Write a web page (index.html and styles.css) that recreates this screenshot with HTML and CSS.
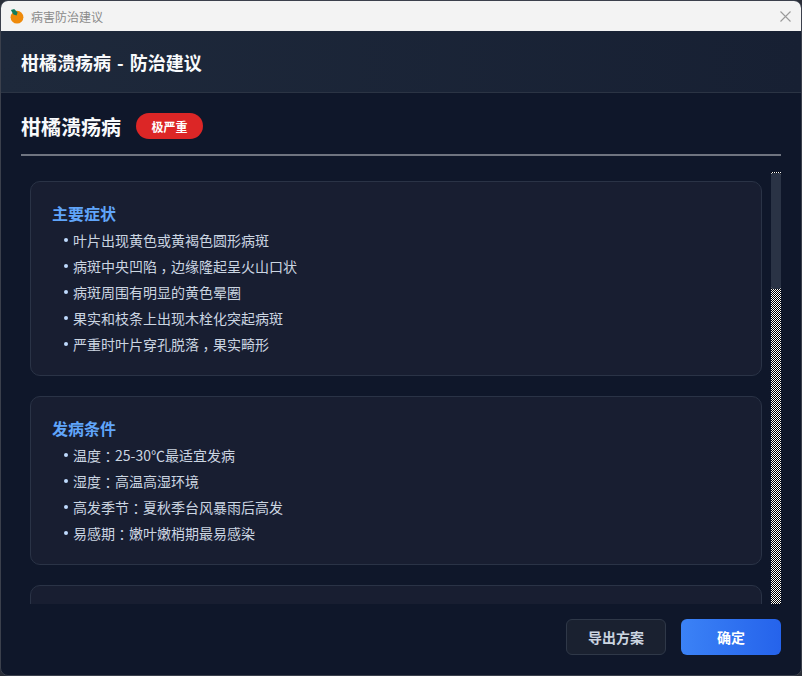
FILE: index.html
```html
<!DOCTYPE html>
<html lang="zh-CN">
<head>
<meta charset="utf-8">
<title>病害防治建议</title>
<link rel="stylesheet" href="styles.css">
</head>
<body>
<div class="window">
  <div class="titlebar">
    <svg class="app-icon" viewBox="0 0 14 15" width="14" height="15">
      <circle cx="7" cy="8.2" r="6.4" fill="#ef8a0a"/>
      <path d="M0.9 1 L4.2 0 L7.6 3.4 L6.6 6.4 L3.4 5.4 Z" fill="#137c5c"/>
    </svg>
    <span class="titlebar-text">病害防治建议</span>
    <svg class="close-icon" viewBox="0 0 11 11" width="11" height="11">
      <path d="M0.5 0.5 L10.5 10.5 M10.5 0.5 L0.5 10.5" stroke="#9a9a9a" stroke-width="1.1" fill="none"/>
    </svg>
  </div>
  <header class="header">柑橘溃疡病 - 防治建议</header>
  <main class="content">
    <div class="disease-row">
      <h1 class="disease-name">柑橘溃疡病</h1>
      <span class="badge">极严重</span>
    </div>
    <div class="scroll-area">
      <div class="scroller">
        <section class="card">
          <h2 class="card-title">主要症状</h2>
          <ul class="card-list">
            <li><span>叶片出现黄色或黄褐色圆形病斑</span></li>
            <li><span>病斑中央凹陷<span class="punct">，</span>边缘隆起呈火山口状</span></li>
            <li><span>病斑周围有明显的黄色晕圈</span></li>
            <li><span>果实和枝条上出现木栓化突起病斑</span></li>
            <li><span>严重时叶片穿孔脱落<span class="punct">，</span>果实畸形</span></li>
          </ul>
        </section>
        <section class="card">
          <h2 class="card-title">发病条件</h2>
          <ul class="card-list">
            <li><span>温度<span class="punct">：</span>25-30℃最适宜发病</span></li>
            <li><span>湿度<span class="punct">：</span>高温高湿环境</span></li>
            <li><span>高发季节<span class="punct">：</span>夏秋季台风暴雨后高发</span></li>
            <li><span>易感期<span class="punct">：</span>嫩叶嫩梢期最易感染</span></li>
          </ul>
        </section>
        <section class="card card-tall"></section>
      </div>
      <div class="scrollbar"><div class="scrollbar-thumb"></div></div>
    </div>
  </main>
  <footer class="footer">
    <button class="btn btn-secondary">导出方案</button>
    <button class="btn btn-primary">确定</button>
  </footer>
</div>
</body>
</html>
```
FILE: styles.css
```css
* { box-sizing: border-box; }
html, body { margin: 0; height: 100%; background: #2a2e38; }
body { font-family: "Microsoft YaHei", "Noto Sans CJK SC", "Noto Sans", sans-serif; overflow: hidden; }
.window {
  height: 676px;
  display: flex;
  flex-direction: column;
  border: 1px solid #3b404c;
  border-radius: 8px;
  overflow: hidden;
  background: #0f172a;
}
.titlebar {
  height: 30px;
  flex: none;
  display: flex;
  align-items: center;
  padding: 0 10px 0 9px;
  background: #f3f3f3;
}
.app-icon { flex: none; }
.titlebar-text { margin-left: 7px; font-size: 12px; color: #8a8a8a; }
.close-icon { margin-left: auto; }
.header {
  height: 62px;
  flex: none;
  display: flex;
  align-items: center;
  padding: 0 20px;
  font-size: 18px;
  font-weight: 700;
  word-spacing: 2px;
  color: #f8fafc;
  background: linear-gradient(90deg, #1e293b, #172033);
  border-bottom: 1px solid #2b3444;
}
.content {
  flex: 1;
  min-height: 0;
  display: flex;
  flex-direction: column;
  padding: 20px 20px 0;
}
.disease-row {
  flex: none;
  height: 43px;
  display: flex;
  align-items: flex-start;
  gap: 15px;
  border-bottom: 2px solid #6f7480;
}
.disease-name { margin: 0; font-size: 20px; line-height: 28px; font-weight: 700; color: #f8fafc; }
.badge {
  width: 67px;
  height: 26px;
  display: flex;
  align-items: center;
  justify-content: center;
  border-radius: 13px;
  background: #dc2626;
  color: #fff;
  font-size: 12px;
  font-weight: 700;
}
.scroll-area {
  flex: 1;
  min-height: 0;
  margin-top: 16px;
  display: flex;
}
.scroller {
  flex: 1;
  min-width: 0;
  overflow: hidden;
  display: flex;
  flex-direction: column;
  gap: 20px;
  padding: 9px 9px 0;
}
.scrollbar {
  flex: none;
  width: 10px;
  background-image:
    repeating-linear-gradient(90deg, #fff 0 1px, #000 1px 2px),
    repeating-linear-gradient(180deg, #fff 0 1px, #000 1px 2px);
  background-blend-mode: difference;
}
.scrollbar-thumb {
  height: 116px;
  margin-top: 1px;
  background: #2a3345;
  border-radius: 2px;
}
.card {
  flex: none;
  padding: 19px 21px 18px;
  background: #181e31;
  border: 1px solid #2a3346;
  border-radius: 10px;
}
.card-tall { height: 400px; }
.card-title {
  margin: 0 0 2px;
  font-size: 16px;
  line-height: 24px;
  font-weight: 700;
  color: #60a5fa;
}
.card-list { margin: 0; padding: 0; list-style: none; }
.card-list li {
  display: flex;
  align-items: center;
  height: 26px;
  padding-left: 12px;
  font-size: 14px;
  color: #cbd5e1;
  gap: 5px;
}
.card-list li::before {
  content: "";
  flex: none;
  width: 4px;
  height: 4px;
  border-radius: 50%;
  background: #bfdbfe;
}
.punct {
  font-feature-settings: "halt";
  padding: 0 3.5px;
}
.footer {
  height: 71px;
  flex: none;
  display: flex;
  justify-content: flex-end;
  align-items: flex-start;
  gap: 15px;
  padding: 15px 20px 0;
}
.btn {
  width: 100px;
  height: 36px;
  border-radius: 6px;
  font: 700 14px "Microsoft YaHei", "Noto Sans CJK SC", "Noto Sans", sans-serif;
}
.btn-secondary { background: #1a2130; border: 1px solid #2f3848; color: #cbd5e1; }
.btn-primary { background: linear-gradient(90deg, #3b82f6, #2563eb); border: 0; color: #fff; }
```
